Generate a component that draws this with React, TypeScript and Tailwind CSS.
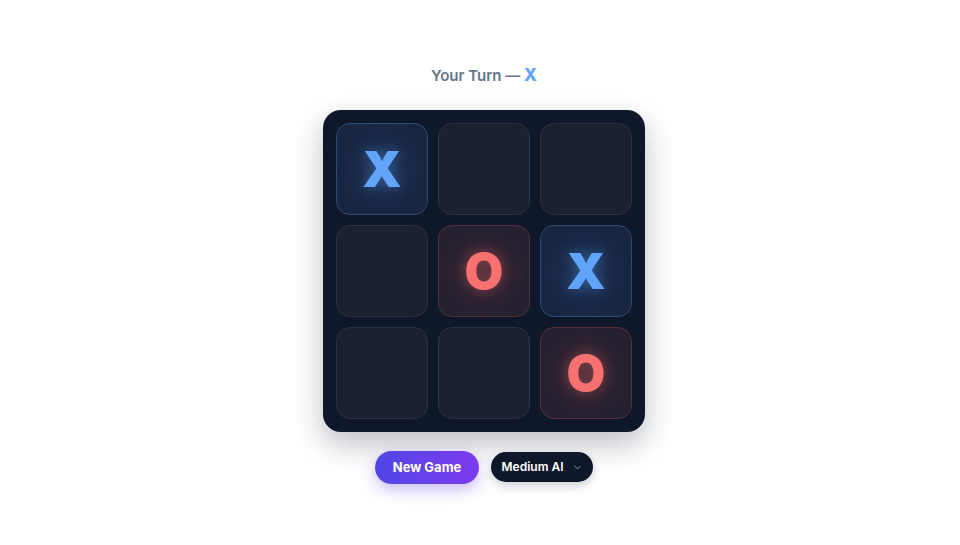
import { ChevronDown } from 'lucide-react'

type Mark = 'X' | 'O' | null

const board: Mark[] = ['X', null, null, null, 'O', 'X', null, null, 'O']

function Cell({ mark }: { mark: Mark }) {
  if (mark === 'X') {
    return (
      <div className="w-[92px] h-[92px] rounded-[14px] border border-[#2f4c75] bg-[radial-gradient(circle,#1e3358_0%,#172540_70%)] flex items-center justify-center">
        <span className="text-[50px] font-black text-[#60a5fa] leading-none [text-shadow:0_0_14px_rgba(96,165,250,0.45)]">X</span>
      </div>
    )
  }
  if (mark === 'O') {
    return (
      <div className="w-[92px] h-[92px] rounded-[14px] border border-[#5a2e3a] bg-[radial-gradient(circle,#3a2633_0%,#25202e_70%)] flex items-center justify-center">
        <span className="text-[50px] font-black text-[#f87171] leading-none [text-shadow:0_0_14px_rgba(248,113,113,0.45)]">O</span>
      </div>
    )
  }
  return <div className="w-[92px] h-[92px] rounded-[14px] border border-[#2b3243] bg-[#1c2130]" />
}

export default function App() {
  return (
    <div className="min-h-screen bg-white flex flex-col items-center justify-center pl-[8px] font-['Inter','Liberation_Sans',sans-serif]">
      <div className="text-[15px] font-semibold text-[#64748b] pt-[2px] mb-[21px]">
        Your Turn — <span className="text-[#60a5fa] font-extrabold text-[17px]">X</span>
      </div>

      <div className="bg-[#0f172a] rounded-[18px] p-[13px] grid grid-cols-3 gap-[10px] shadow-[0_12px_30px_rgba(15,23,42,0.28)]">
        {board.map((m, i) => (
          <Cell key={i} mark={m} />
        ))}
      </div>

      <div className="flex items-center gap-3 mt-[19px]">
        <button className="w-[104px] h-[33px] rounded-full bg-gradient-to-r from-[#4f46e5] to-[#7c3aed] text-white text-[13px] font-bold shadow-[0_6px_16px_rgba(99,70,230,0.35)]">
          New Game
        </button>
        <button className="w-[102px] h-[30px] rounded-full bg-[#0f172a] text-white text-[12px] font-semibold flex items-center justify-center gap-2 shadow-[0_4px_10px_rgba(15,23,42,0.2)]">
          Medium AI
          <ChevronDown size={11} className="text-[#94a3b8]" />
        </button>
      </div>
    </div>
  )
}
